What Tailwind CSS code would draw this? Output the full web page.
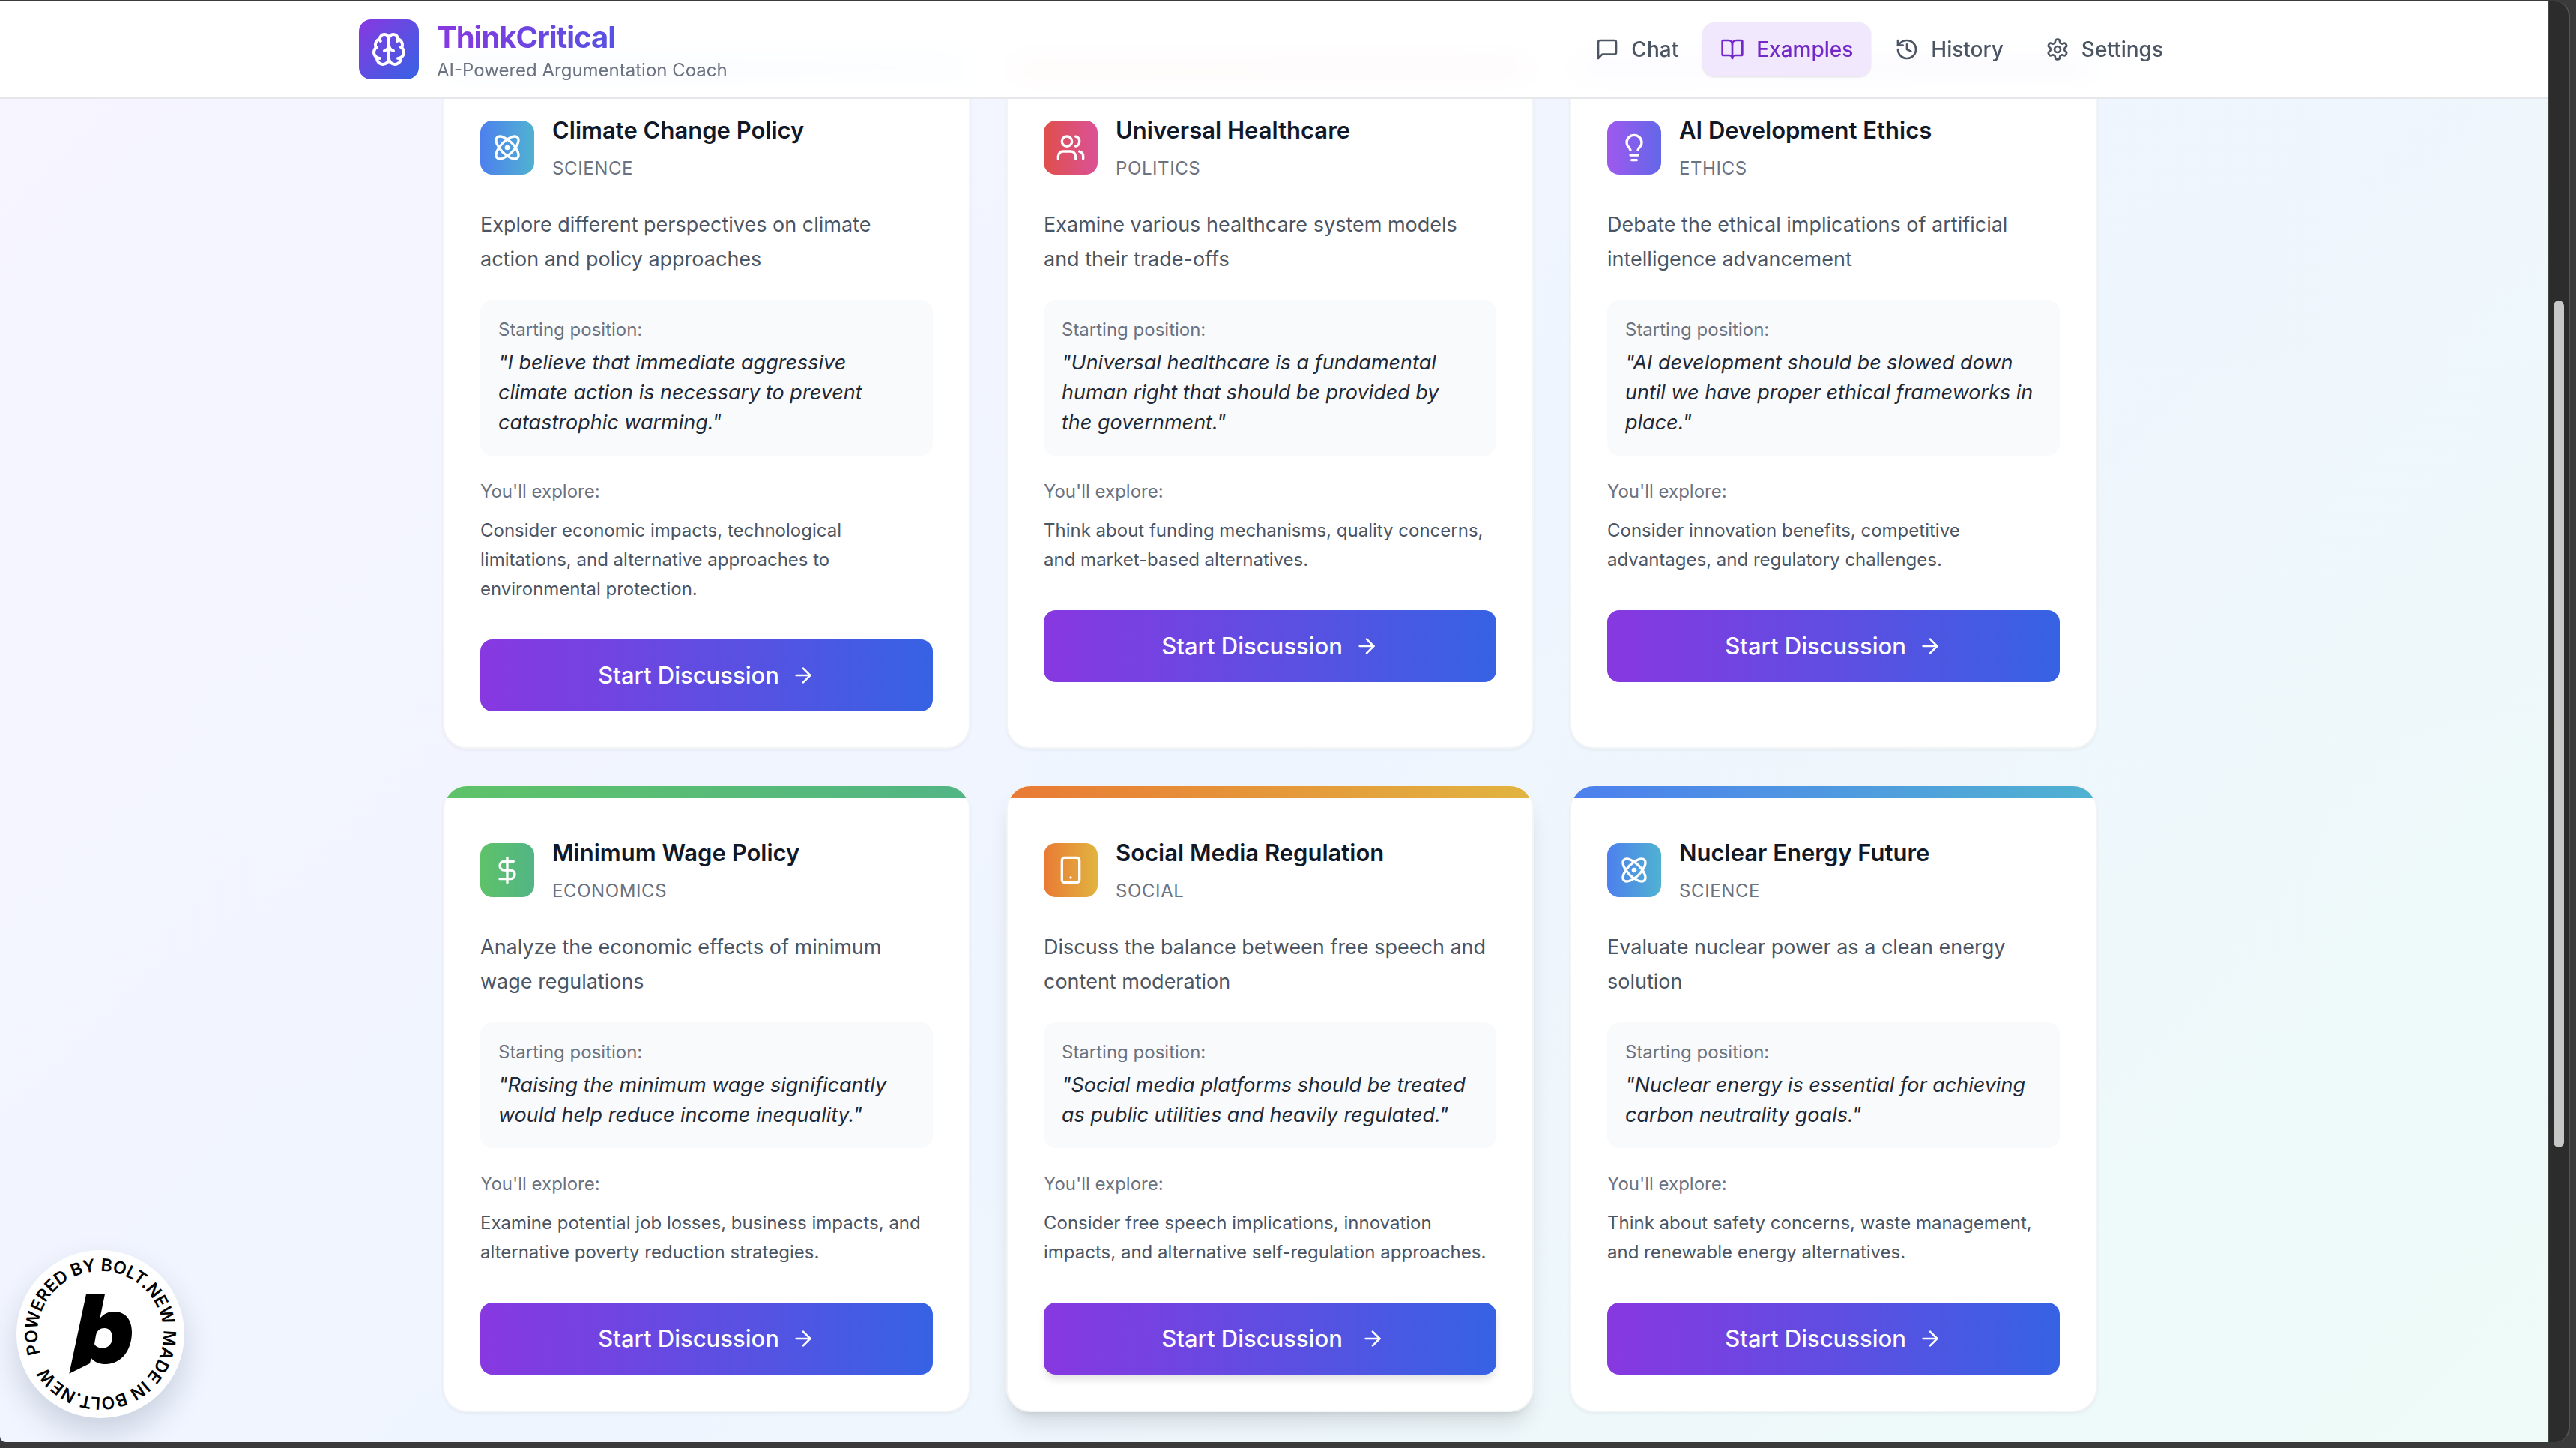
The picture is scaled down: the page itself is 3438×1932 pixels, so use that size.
<!DOCTYPE html>
<html lang="en">
<head>
  <meta charset="UTF-8" />
  <meta name="viewport" content="width=device-width, initial-scale=1.0" />
  <title>ThinkCritical | Examples</title>
  <script src="https://cdn.jsdelivr.net/npm/@tailwindcss/browser@4"></script>
</head>
<body class="bg-[#3a3a3a] h-screen overflow-hidden font-['Inter','Liberation_Sans',sans-serif] antialiased">
  <div class="h-full pt-[2px] pb-2 pr-2 flex">
    <!-- Page -->
    <div class="relative flex-1 min-w-0 overflow-hidden rounded-bl-lg">
      <div class="absolute inset-x-0 -top-[680px] h-[3270px] bg-linear-to-br/srgb from-[#f9f5ff] via-[#eff5ff] to-[#edfcf5]"></div>

      <!-- Header -->
      <header class="absolute z-10 inset-x-0 top-0 bg-white/95 backdrop-blur-lg border-b-2 border-[#e5e7eb]">
        <div class="w-[2432px] max-w-full mx-auto -translate-x-[5px] h-32 flex items-center justify-between">
          <a href="#" class="flex items-center gap-6">
            <span class="w-20 h-20 rounded-2xl bg-linear-to-br/srgb from-[#8838e0] to-[#3662e3] flex items-center justify-center text-white">
              <svg class="w-12 h-12" viewBox="0 0 24 24" fill="none" stroke="currentColor" stroke-width="2" stroke-linecap="round" stroke-linejoin="round"><path d="M12 5a3 3 0 1 0-5.997.125 4 4 0 0 0-2.526 5.77 4 4 0 0 0 .556 6.588A4 4 0 1 0 12 18Z"/><path d="M12 5a3 3 0 1 1 5.997.125 4 4 0 0 1 2.526 5.77 4 4 0 0 1-.556 6.588A4 4 0 1 1 12 18Z"/><path d="M15 13a4.5 4.5 0 0 1-3-4 4.5 4.5 0 0 1-3 4"/><path d="M17.599 6.5a3 3 0 0 0 .399-1.375"/><path d="M6.003 5.125A3 3 0 0 0 6.401 6.5"/><path d="M3.477 10.896a4 4 0 0 1 .585-.396"/><path d="M19.938 10.5a4 4 0 0 1 .585.396"/><path d="M6 18a4 4 0 0 1-1.967-.516"/><path d="M19.967 17.484A4 4 0 0 1 18 18"/></svg>
            </span>
            <span class="flex flex-col">
              <span class="text-[40px] leading-[56px] font-bold tracking-tight bg-linear-to-r/srgb from-[#8838e0] to-[#3662e3] bg-clip-text text-transparent">ThinkCritical</span>
              <span class="text-[24px] leading-8 text-[#6b7280]">AI-Powered Argumentation Coach</span>
            </span>
          </a>
          <nav class="flex gap-2 text-[28px] leading-10 font-medium text-[#4b5563]">
            <button class="flex items-center gap-4 px-6 py-4 rounded-2xl">
              <svg class="w-8 h-8" viewBox="0 0 24 24" fill="none" stroke="currentColor" stroke-width="2" stroke-linecap="round" stroke-linejoin="round"><path d="M21 15a2 2 0 0 1-2 2H7l-4 4V5a2 2 0 0 1 2-2h14a2 2 0 0 1 2 2z"/></svg>
              Chat
            </button>
            <button class="flex items-center gap-4 px-6 py-4 rounded-2xl bg-[#f1e8fd] text-[#7329c8] shadow-sm">
              <svg class="w-8 h-8" viewBox="0 0 24 24" fill="none" stroke="currentColor" stroke-width="2" stroke-linecap="round" stroke-linejoin="round"><path d="M12 7v14"/><path d="M3 18a1 1 0 0 1-1-1V4a1 1 0 0 1 1-1h5a4 4 0 0 1 4 4 4 4 0 0 1 4-4h5a1 1 0 0 1 1 1v13a1 1 0 0 1-1 1h-6a3 3 0 0 0-3 3 3 3 0 0 0-3-3z"/></svg>
              Examples
            </button>
            <button class="flex items-center gap-4 px-6 py-4 rounded-2xl">
              <svg class="w-8 h-8" viewBox="0 0 24 24" fill="none" stroke="currentColor" stroke-width="2" stroke-linecap="round" stroke-linejoin="round"><path d="M3 12a9 9 0 1 0 9-9 9.75 9.75 0 0 0-6.74 2.74L3 8"/><path d="M3 3v5h5"/><path d="M12 7v5l4 2"/></svg>
              History
            </button>
            <button class="flex items-center gap-4 px-6 py-4 rounded-2xl">
              <svg class="w-8 h-8" viewBox="0 0 24 24" fill="none" stroke="currentColor" stroke-width="2" stroke-linecap="round" stroke-linejoin="round"><path d="M12.22 2h-.44a2 2 0 0 0-2 2v.18a2 2 0 0 1-1 1.73l-.43.25a2 2 0 0 1-2 0l-.15-.08a2 2 0 0 0-2.73.73l-.22.38a2 2 0 0 0 .73 2.73l.15.1a2 2 0 0 1 1 1.72v.51a2 2 0 0 1-1 1.74l-.15.09a2 2 0 0 0-.73 2.73l.22.38a2 2 0 0 0 2.73.73l.15-.08a2 2 0 0 1 2 0l.43.25a2 2 0 0 1 1 1.73V20a2 2 0 0 0 2 2h.44a2 2 0 0 0 2-2v-.18a2 2 0 0 1 1-1.73l.43-.25a2 2 0 0 1 2 0l.15.08a2 2 0 0 0 2.73-.73l.22-.39a2 2 0 0 0-.73-2.73l-.15-.08a2 2 0 0 1-1-1.74v-.5a2 2 0 0 1 1-1.74l.15-.09a2 2 0 0 0 .73-2.73l-.22-.38a2 2 0 0 0-2.73-.73l-.15.08a2 2 0 0 1-2 0l-.43-.25a2 2 0 0 1-1-1.73V4a2 2 0 0 0-2-2z"/><circle cx="12" cy="12" r="3"/></svg>
              Settings
            </button>
          </nav>
        </div>
      </header>

      <!-- Cards -->
      <main id="cards" class="relative w-[2208px] max-w-full mx-auto -translate-x-[5px] pt-[81px] grid grid-cols-3 gap-12"></main>

      <!-- Badge -->
      <a href="#" aria-label="Powered by Bolt.new" class="absolute z-10 left-[22px] bottom-8 w-56 h-56 rounded-full bg-white shadow-[0_20px_40px_rgba(30,50,80,0.18)]">
        <svg class="w-full h-full" viewBox="0 0 224 224">
          <defs><path id="ring" d="M32.1 138 A84 84 0 1 1 191.9 86 A84 84 0 1 1 32.1 138"/></defs>
          <text class="text-[23px] font-semibold" fill="#000"><textPath href="#ring">POWERED BY BOLT.NEW MADE IN BOLT.NEW</textPath></text>
          <path transform="translate(-22 -28) scale(.33333)" fill="#000" fill-rule="evenodd" d="M345 260H420L400 357C415 339 434 330 456 330C503 330 528 363 528 412C528 480 489 540 423 540C398 540 377 531 365 515L360 537L277 578ZM418 396C399 396 387 409 384 425L378 460C385 471 395 476 409 476C433 476 450 459 450 434C450 411 438 396 418 396Z"/>
        </svg>
      </a>
    </div>

    <!-- Scrollbar -->
    <div class="w-[30px] bg-[#2c2c2c] border-x-2 border-l-[#444] border-r-[#555] rounded-r-[20px] flex justify-center pt-[399px]">
      <div class="w-[14px] h-[1130px] rounded-full bg-[#c8c8c8]"></div>
    </div>
  </div>

  <script>
    const icons = {
      atom: '<circle cx="12" cy="12" r="1"/><path d="M20.2 20.2c2.04-2.03.02-7.36-4.5-11.9-4.54-4.52-9.87-6.54-11.9-4.5-2.04 2.03-.02 7.36 4.5 11.9 4.54 4.52 9.87 6.54 11.9 4.5Z"/><path d="M15.7 15.7c4.52-4.54 6.54-9.87 4.5-11.9-2.03-2.04-7.36-.02-11.9 4.5-4.52 4.54-6.54 9.87-4.5 11.9 2.03 2.04 7.36.02 11.9-4.5Z"/>',
      users: '<path d="M16 21v-2a4 4 0 0 0-4-4H6a4 4 0 0 0-4 4v2"/><circle cx="9" cy="7" r="4"/><path d="M22 21v-2a4 4 0 0 0-3-3.87"/><path d="M16 3.13a4 4 0 0 1 0 7.75"/>',
      bulb: '<path d="M15 14c.2-1 .7-1.7 1.5-2.5 1-.9 1.5-2.2 1.5-3.5A6 6 0 0 0 6 8c0 1 .2 2.2 1.5 3.5.7.7 1.3 1.5 1.5 2.5"/><path d="M9 18h6"/><path d="M10 22h4"/>',
      dollar: '<path d="M12 2v20"/><path d="M17 5H9.5a3.5 3.5 0 0 0 0 7h5a3.5 3.5 0 0 1 0 7H6"/>',
      phone: '<rect width="14" height="20" x="5" y="2" rx="2" ry="2"/><path d="M12 18h.01"/>'
    };

    const examples = [
      { title: 'Climate Change Policy', category: 'Science', icon: 'atom', color: 'from-[#4d80ee] to-[#50b2d1]',
        text: 'Explore different perspectives on climate action and policy approaches',
        quote: 'I believe that immediate aggressive climate action is necessary to prevent catastrophic warming.',
        explore: 'Consider economic impacts, technological limitations, and alternative approaches to environmental protection.' },
      { title: 'Universal Healthcare', category: 'Politics', icon: 'users', color: 'from-[#df4f4b] to-[#db5297]',
        text: 'Examine various healthcare system models and their trade-offs',
        quote: 'Universal healthcare is a fundamental human right that should be provided by the government.',
        explore: 'Think about funding mechanisms, quality concerns, and market-based alternatives.' },
      { title: 'AI Development Ethics', category: 'Ethics', icon: 'bulb', color: 'from-[#9f59ee] to-[#6367e9]',
        text: 'Debate the ethical implications of artificial intelligence advancement',
        quote: 'AI development should be slowed down until we have proper ethical frameworks in place.',
        explore: 'Consider innovation benefits, competitive advantages, and regulatory challenges.' },
      { title: 'Minimum Wage Policy', category: 'Economics', icon: 'dollar', color: 'from-[#5ec269] to-[#52b585]',
        text: 'Analyze the economic effects of minimum wage regulations',
        quote: 'Raising the minimum wage significantly would help reduce income inequality.',
        explore: 'Examine potential job losses, business impacts, and alternative poverty reduction strategies.' },
      { title: 'Social Media Regulation', category: 'Social', icon: 'phone', color: 'from-[#e97a35] to-[#e1b440]', active: true,
        text: 'Discuss the balance between free speech and content moderation',
        quote: 'Social media platforms should be treated as public utilities and heavily regulated.',
        explore: 'Consider free speech implications, innovation impacts, and alternative self-regulation approaches.' },
      { title: 'Nuclear Energy Future', category: 'Science', icon: 'atom', color: 'from-[#4d80ee] to-[#50b2d1]',
        text: 'Evaluate nuclear power as a clean energy solution',
        quote: 'Nuclear energy is essential for achieving carbon neutrality goals.',
        explore: 'Think about safety concerns, waste management, and renewable energy alternatives.' }
    ];

    document.getElementById('cards').innerHTML = examples.map(e => `
      <article class="bg-white rounded-[32px] border-2 border-[#f3f4f6] overflow-hidden ${e.active ? 'shadow-[0_20px_30px_-6px_rgba(0,0,0,0.12),0_8px_12px_-8px_rgba(0,0,0,0.12)]' : 'shadow-[0_2px_4px_rgba(0,0,0,0.05)]'}">
        <div class="h-4 bg-linear-to-r/srgb ${e.color}"></div>
        <div class="p-12">
          <div class="flex items-center gap-6 mb-8">
            <div class="w-[72px] h-[72px] rounded-2xl bg-linear-to-r/srgb ${e.color} flex items-center justify-center text-white">
              <svg class="w-10 h-10" viewBox="0 0 24 24" fill="none" stroke="currentColor" stroke-width="2" stroke-linecap="round" stroke-linejoin="round">${icons[e.icon]}</svg>
            </div>
            <div>
              <h3 class="text-[31px] leading-[50px] font-semibold text-[#111827]">${e.title}</h3>
              <p class="mt-1.5 text-[24px] leading-10 tracking-wide uppercase text-[#6b7280]">${e.category}</p>
            </div>
          </div>
          <p class="mb-[31px] text-[27px] leading-[46px] text-[#4b5563]">${e.text}</p>
          <div class="mb-8 p-6 rounded-2xl bg-[#f9fafb]">
            <p class="mb-2 text-[24px] leading-8 text-[#6b7280]">Starting position:</p>
            <p class="pr-2 text-[27px] leading-10 italic text-[#1f2937]">"${e.quote}"</p>
          </div>
          <p class="mb-4 text-[24px] leading-8 text-[#6b7280]">You'll explore:</p>
          <p class="mb-12 text-[24px] leading-relaxed text-[#4b5563]">${e.explore}</p>
          <button class="w-full py-6 rounded-2xl bg-linear-to-r/srgb from-[#8838e0] to-[#3662e3] text-white text-[31px] leading-[48px] font-medium flex items-center justify-center gap-4 ${e.active ? 'shadow-[0_8px_12px_-2px_rgba(0,0,0,0.12)]' : ''}">
            Start Discussion
            <svg class="w-8 h-8 ${e.active ? 'translate-x-2' : ''}" viewBox="0 0 24 24" fill="none" stroke="currentColor" stroke-width="2" stroke-linecap="round" stroke-linejoin="round"><path d="M5 12h14"/><path d="m12 5 7 7-7 7"/></svg>
          </button>
        </div>
      </article>`).join('');
  </script>
</body>
</html>
